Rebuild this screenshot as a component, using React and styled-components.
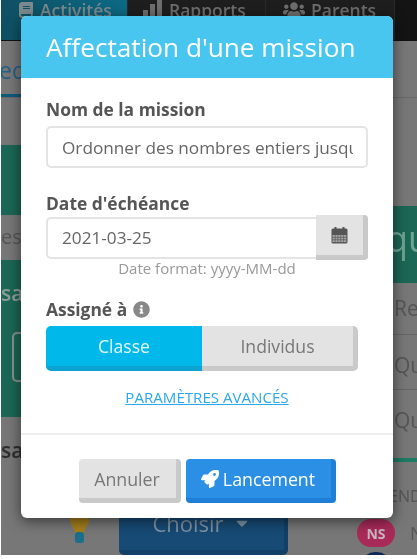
import React from 'react';
import styled, { createGlobalStyle } from 'styled-components';
import { FaBook, FaUsers, FaInfoCircle, FaRocket, FaCaretDown } from 'react-icons/fa';

const Global = createGlobalStyle`
  html, body { margin: 0; padding: 0; background: #fff; }
  * { box-sizing: border-box; }
  body { font-family: "Open Sans", "Liberation Sans", sans-serif; }
`;

const Stage = styled.div`
  position: relative;
  width: 417px;
  height: 559px;
  overflow: hidden;
  background: #fff;
  padding: 0 0 4px 1px;
  filter: blur(0.35px);
`;
const Page = styled.div`
  height: 555px;
  display: flex;
  flex-direction: column;
  background: #777;
  overflow: hidden;
`;
const Nav = styled.nav`
  height: 41px;
  flex: none;
  display: grid;
  grid-template-columns: 127px 138px 129px 1fr;
  background: #1b1b1b;
  border-bottom: 1px solid #111;
`;
const NavCell = styled.div`
  height: 40px;
  background: ${p => (p.$active ? 'linear-gradient(90deg,#0f4f62,#0c6a86)' : p.$end ? '#141414' : '#1e1e1e')};
  border-right: ${p => (p.$end ? 0 : '1px solid #2a2a2a')};
`;
const NavTab = styled.div`
  display: flex;
  gap: 6px;
  padding: 0 0 0 ${p => p.$pad}px;
  height: 19px;
  align-items: center;
  font-size: 17.5px;
  font-weight: 600;
  color: ${p => (p.$active ? '#7c8a8e' : '#6e6e6e')};
  white-space: nowrap;
`;
const Bars = styled.svg`
  width: 20px;
  height: 19px;
  flex: none;
`;
const SubNav = styled.div`
  height: 57px;
  flex: none;
  background: #777;
  border-bottom: 1px solid #696969;
`;
const SubTab = styled.div`
  width: 60px;
  height: 56px;
  margin-left: -2px;
  padding-top: 13px;
  font-size: 23px;
  line-height: 32px;
  color: #245f84;
  border-bottom: 3px solid #0e5a7c;
`;
const Columns = styled.div`
  flex: 1;
  display: grid;
  grid-template-columns: 305px 1fr;
`;
const Column = styled.div`
  display: flex;
  flex-direction: column;
`;
const Band = styled.div`
  height: ${p => p.$h}px;
  flex: none;
  background: ${p => (p.$green ? '#1c6655' : '#777')};
  overflow: hidden;
`;
const Fragment = styled.div`
  font-size: ${p => p.$size || 20}px;
  font-weight: ${p => p.$weight || 400};
  color: ${p => p.$color};
  padding-top: ${p => p.$top}px;
  padding-left: ${p => p.$left || 0}px;
  line-height: 28px;
  white-space: nowrap;
`;
const OutlineBox = styled.div`
  width: 60px;
  height: 50px;
  margin: 25px 0 0 11px;
  border: 2px solid #87938f;
  border-radius: 5px;
`;
const BottomLeft = styled(Band)`
  display: flex;
  flex-direction: column;
  justify-content: space-between;
`;
const ActionRow = styled.div`
  display: flex;
  align-items: flex-end;
  padding-left: 68px;
  gap: 29px;
  height: 52px;
`;
const Bulb = styled.svg`
  width: 21px;
  height: 34px;
  margin-bottom: 11px;
  flex: none;
`;
const Choose = styled.div`
  width: 169px;
  height: 52px;
  display: flex;
  justify-content: center;
  align-items: center;
  gap: 9px;
  padding-bottom: 8px;
  background: #174a75;
  border-right: 4px solid #124068;
  border-bottom: 5px solid #124068;
  border-radius: 0 0 5px 5px;
  font-size: 22px;
  color: #7f93a5;
  svg { font-size: 18px; }
`;
const RightRow = styled.div`
  height: ${p => p.$h}px;
  flex: none;
  border-bottom: ${p => (p.$line ? '1px solid #666' : '0')};
  padding-left: 88px;
  font-size: 21px;
  line-height: 28px;
  color: #555;
  padding-top: ${p => p.$top}px;
  white-space: nowrap;
`;
const GreenRule = styled.div`
  height: 4px;
  flex: none;
  background: #1d7a64;
`;
const LegendHead = styled.div`
  height: 57px;
  flex: none;
  padding: 24px 0 0 83px;
  font-size: 16px;
  line-height: 20px;
  color: #555;
  white-space: nowrap;
`;
const Legend = styled.div`
  display: flex;
  align-items: center;
  gap: 15px;
  padding-left: 51px;
  font-size: 18px;
  color: #555;
`;
const Pill = styled.div`
  width: ${p => p.$w}px;
  height: 28px;
  flex: none;
  border-radius: 14px;
  background: ${p => p.$bg};
  color: #c9b6bf;
  font-size: 14px;
  font-weight: 700;
  display: flex;
  align-items: center;
  justify-content: center;
`;
const PillTail = styled(Pill)`
  margin: 5px 0 0 55px;
`;

const Modal = styled.div`
  position: absolute;
  left: 21px;
  top: 16px;
  width: 372px;
  height: 502px;
  background: #fff;
  border-radius: 6px;
  box-shadow: 0 3px 14px rgba(0, 0, 0, 0.55);
  display: flex;
  flex-direction: column;
  overflow: hidden;
`;
const Header = styled.header`
  height: 62px;
  flex: none;
  background: #48c6f0;
  padding-left: 25px;
  display: flex;
  align-items: center;
  color: #fff;
  font-size: 26.2px;
  white-space: nowrap;
`;
const Body = styled.div`
  height: 357px;
  flex: none;
  padding: 20px 25px 0;
  border-bottom: 2px solid #eee;
`;
const Label = styled.div`
  font-size: 17.4px;
  font-weight: 700;
  line-height: 22px;
  margin-top: ${p => p.$top || 0}px;
  color: #555;
  display: flex;
  align-items: center;
  gap: 6px;
  svg { font-size: 17px; color: #888; }
`;
const Field = styled.div`
  height: 42px;
  margin-top: 6px;
  width: ${p => p.$w || 322}px;
  border: 2px solid #e4e4e4;
  border-radius: 5px;
  padding: 0 13px 0 14px;
  display: flex;
  align-items: center;
  font-size: 17.2px;
  color: #666;
  white-space: nowrap;
`;
const FieldText = styled.span`
  display: block;
  width: 100%;
  overflow: hidden;
`;
const DateRow = styled.div`
  display: flex;
  align-items: center;
  margin-top: 1px;
`;
const DateField = styled(Field)`
  margin-top: 0;
  border-radius: 5px 0 0 5px;
  border-right: 0;
`;
const AddOn = styled.div`
  width: 52px;
  height: 45px;
  flex: none;
  background: #e3e3e3;
  border-right: 5px solid #c9c9c9;
  border-bottom: 5px solid #c9c9c9;
  border-radius: 0 4px 4px 0;
  display: flex;
  align-items: center;
  justify-content: center;
`;
const CalendarIcon = styled.svg`
  width: 17px;
  height: 17px;
`;
const Hint = styled.div`
  font-size: 15px;
  line-height: 16px;
  color: #999;
  text-align: center;
  white-space: nowrap;
`;
const Toggle = styled.div`
  display: flex;
  width: 312px;
  height: 45px;
  margin-top: 6px;
`;
const ToggleBtn = styled.div`
  width: 156px;
  display: flex;
  align-items: center;
  justify-content: center;
  font-size: 17.6px;
  background: ${p => (p.$on ? '#00b9ea' : '#e3e3e3')};
  color: ${p => (p.$on ? '#e6f8fd' : '#777')};
  border-bottom: 5px solid ${p => (p.$on ? '#0ca3d2' : '#c9c9c9')};
  border-right: ${p => (p.$on ? '0' : '5px solid #c9c9c9')};
  border-radius: ${p => (p.$on ? '5px 0 0 5px' : '0 5px 5px 0')};
`;
const LinkRow = styled.div`
  text-align: center;
  margin-top: 16px;
  font-size: 15.1px;
  line-height: 20px;
  color: #2aa8ee;
  text-decoration: underline;
`;
const Footer = styled.footer`
  flex: 1;
  display: flex;
  justify-content: center;
  gap: 5px;
  padding-top: 24px;
`;
const Btn = styled.div`
  width: ${p => p.$w}px;
  height: 44px;
  display: flex;
  align-items: center;
  justify-content: center;
  gap: 4px;
  padding-top: 1px;
  font-size: 17.8px;
  border-radius: 4px;
  background: ${p => (p.$primary ? '#2a8fe5' : '#e3e3e3')};
  color: ${p => (p.$primary ? '#fff' : '#777')};
  border-right: 5px solid ${p => (p.$primary ? '#1f7fd6' : '#c9c9c9')};
  border-bottom: 5px solid ${p => (p.$primary ? '#1f7fd6' : '#c9c9c9')};
`;

const calendarCells = [];
for (let r = 0; r < 3; r++) for (let c = 0; c < 5; c++) calendarCells.push([1.5 + c * 2.9, 8 + r * 2.6]);

export default function App() {
  return (
    <>
      <Global />
      <Stage>
        <Page>
          <Nav>
            <NavCell $active><NavTab $active $pad={17}><FaBook size={16} /> Activités</NavTab></NavCell>
            <NavCell><NavTab $pad={15}>
              <Bars viewBox="0 0 20 19" fill="#6e6e6e"><rect x="0" y="10" width="5" height="9" /><rect x="7" y="4" width="5" height="15" /><rect x="14" y="0" width="5" height="19" /></Bars>
              Rapports</NavTab></NavCell>
            <NavCell><NavTab $pad={17}><FaUsers size={22} /> Parents</NavTab></NavCell>
            <NavCell $end />
          </Nav>
          <SubNav><SubTab>ed</SubTab></SubNav>
          <Columns>
            <Column>
              <Band $h={47} />
              <Band $h={70} $green />
              <Band $h={45}><Fragment $color="#555" $top={8}>es e</Fragment></Band>
              <Band $h={157} $green>
                <Fragment $color="#8c9d97" $top={19} $size={21} $weight={600}>sa</Fragment>
                <OutlineBox />
              </Band>
              <BottomLeft $h={138}>
                <Fragment $color="#2e2e2e" $top={19} $size={21} $weight={600}>sa</Fragment>
                <ActionRow>
                  <Bulb viewBox="0 0 21 34">
                    <path d="M10.5 1C4.8 1 1 5 1 10c0 5 4 7 5 13h9c1-6 5-8 5-13 0-5-3.8-9-9.5-9z" fill="#a67f1c" />
                    <rect x="6" y="22" width="9" height="11" rx="3" fill="#1b6f8c" />
                  </Bulb>
                  <Choose>Choisir <FaCaretDown /></Choose>
                </ActionRow>
              </BottomLeft>
            </Column>
            <Column>
              <Band $h={108} />
              <Band $h={77} $green><Fragment $color="#6fa394" $top={19} $left={80} $size={36}>qu</Fragment></Band>
              <RightRow $h={52} $line $top={11}>Rem</RightRow>
              <RightRow $h={55} $line $top={16}>Que</RightRow>
              <RightRow $h={68} $top={16}>Que</RightRow>
              <GreenRule />
              <LegendHead>END</LegendHead>
              <Legend><Pill $w={38} $bg="#a82a58">NS</Pill> N</Legend>
              <PillTail $w={30} $bg="#0c2a55" />
            </Column>
          </Columns>
        </Page>
        <Modal>
          <Header>Affectation d'une mission</Header>
          <Body>
            <Label>Nom de la mission</Label>
            <Field><FieldText>Ordonner des nombres entiers jusqu'à 100</FieldText></Field>
            <Label $top={24}>Date d'échéance</Label>
            <DateRow>
              <DateField $w={270}>2021-03-25</DateField>
              <AddOn>
                <CalendarIcon viewBox="0 0 17 17">
                  <rect x="0.5" y="1.5" width="16" height="15" rx="1.5" fill="#555" />
                  <rect x="3.5" y="0" width="2" height="3" fill="#555" />
                  <rect x="11.5" y="0" width="2" height="3" fill="#555" />
                  {calendarCells.map(([x, y]) => (
                    <rect key={`${x}-${y}`} x={x} y={y} width="2.2" height="1.9" fill="#a8a8a8" />
                  ))}
                </CalendarIcon>
              </AddOn>
            </DateRow>
            <Hint>Date format: yyyy-MM-dd</Hint>
            <Label $top={22}>Assigné à <FaInfoCircle /></Label>
            <Toggle>
              <ToggleBtn $on>Classe</ToggleBtn>
              <ToggleBtn>Individus</ToggleBtn>
            </Toggle>
            <LinkRow>PARAMÈTRES AVANCÉS</LinkRow>
          </Body>
          <Footer>
            <Btn $w={102}>Annuler</Btn>
            <Btn $w={150} $primary><FaRocket size={18} /> Lancement</Btn>
          </Footer>
        </Modal>
      </Stage>
    </>
  );
}
